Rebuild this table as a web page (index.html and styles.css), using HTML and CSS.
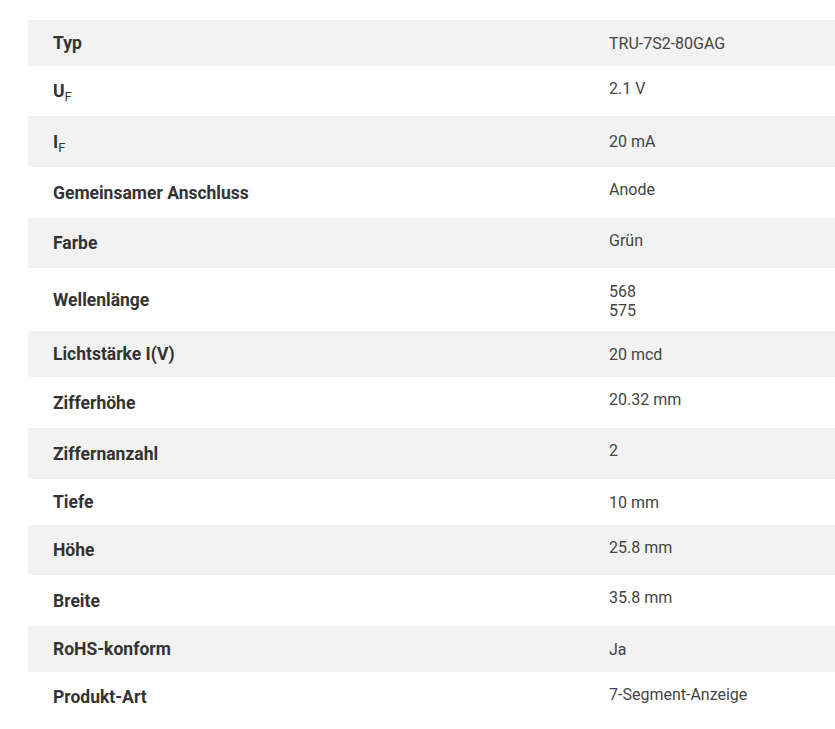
FILE: index.html
```html
<!DOCTYPE html>
<html lang="de">
<head>
<meta charset="utf-8">
<title>Technische Daten</title>
<link rel="stylesheet" href="styles.css">
</head>
<body>
<div class="wrap">
<table class="specs">
<tbody>
<tr class="r46 alt"><th>Typ</th><td>TRU-7S2-80GAG</td></tr>
<tr class="r50"><th>U<sub>F</sub></th><td>2.1 V</td></tr>
<tr class="r51 alt"><th>I<sub>F</sub></th><td class="low">20 mA</td></tr>
<tr class="r51"><th>Gemeinsamer Anschluss</th><td>Anode</td></tr>
<tr class="r50 alt"><th>Farbe</th><td>Grün</td></tr>
<tr class="r63"><th>Wellenlänge</th><td>568<br>575</td></tr>
<tr class="r46 alt"><th>Lichtstärke I(V)</th><td>20 mcd</td></tr>
<tr class="r51"><th>Zifferhöhe</th><td>20.32 mm</td></tr>
<tr class="r51 alt"><th>Ziffernanzahl</th><td>2</td></tr>
<tr class="r46"><th>Tiefe</th><td>10 mm</td></tr>
<tr class="r50 alt"><th>Höhe</th><td>25.8 mm</td></tr>
<tr class="r51"><th>Breite</th><td>35.8 mm</td></tr>
<tr class="r46 alt"><th>RoHS-konform</th><td>Ja</td></tr>
<tr class="r50"><th>Produkt-Art</th><td>7-Segment-Anzeige</td></tr>
</tbody>
</table>
</div>
</body>
</html>
```
FILE: styles.css
```css
html, body {
  margin: 0;
  padding: 0;
  background: #ffffff;
}
body {
  font-family: Roboto, "Liberation Sans", Arial, sans-serif;
}
.wrap {
  padding: 20px 0 0 28px;
}
.specs {
  border-collapse: collapse;
  width: 807px;
}
.specs tr.alt {
  background: #f2f2f2;
}
.specs tr.r46 { height: 46px; }
.specs tr.r50 { height: 50px; }
.specs tr.r51 { height: 51px; }
.specs tr.r63 { height: 63px; }
.specs th {
  width: 556px;
  padding: 0 0 0 25px;
  text-align: left;
  vertical-align: middle;
  font-size: 17.5px;
  font-weight: 700;
  color: #333333;
  line-height: 22px;
}
.specs th sub {
  font-size: 13px;
  font-weight: 400;
  vertical-align: -4px;
  line-height: 0;
}
.specs td {
  padding: 13px 0 0 0;
  vertical-align: top;
  font-size: 16px;
  font-weight: 400;
  color: #444444;
  line-height: 19px;
}
.specs tr.r46 td,
.specs tr.r63 td {
  padding-top: 14px;
}
.specs td.low {
  padding-top: 16px;
}
```
